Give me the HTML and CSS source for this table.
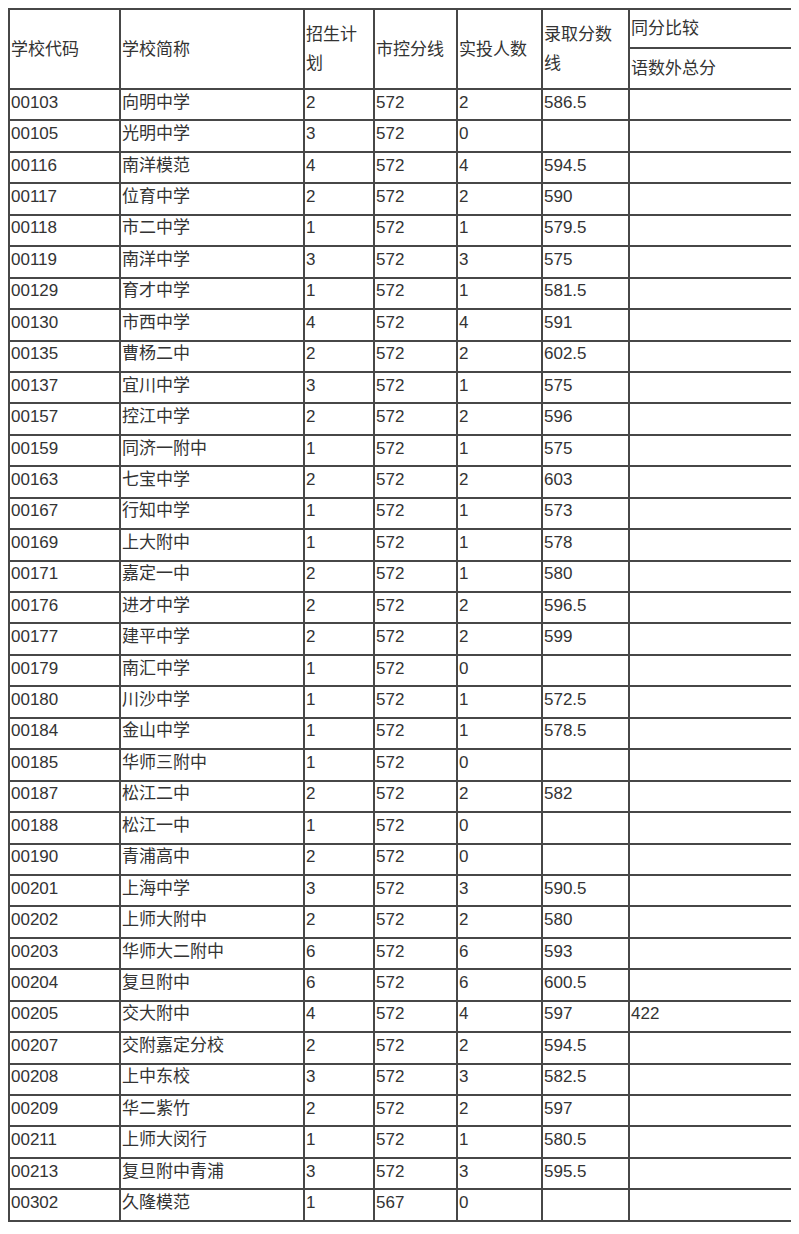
FILE: index.html
```html
<!DOCTYPE html>
<html lang="zh-CN">
<head>
<meta charset="utf-8">
<title>录取分数线</title>
<link rel="stylesheet" href="styles.css">
</head>
<body>
<table class="score-table">
  <colgroup>
    <col class="c-code"><col class="c-name"><col class="c-plan"><col class="c-line"><col class="c-num"><col class="c-score"><col class="c-cmp">
  </colgroup>
  <thead>
    <tr class="h1">
      <td rowspan="2">学校代码</td>
      <td rowspan="2">学校简称</td>
      <td rowspan="2">招生计划</td>
      <td rowspan="2">市控分线</td>
      <td rowspan="2">实投人数</td>
      <td rowspan="2">录取分数线</td>
      <td>同分比较</td>
    </tr>
    <tr class="h2">
      <td>语数外总分</td>
    </tr>
  </thead>
  <tbody>
    <tr><td>00103</td><td>向明中学</td><td>2</td><td>572</td><td>2</td><td>586.5</td><td></td></tr>
    <tr><td>00105</td><td>光明中学</td><td>3</td><td>572</td><td>0</td><td></td><td></td></tr>
    <tr><td>00116</td><td>南洋模范</td><td>4</td><td>572</td><td>4</td><td>594.5</td><td></td></tr>
    <tr><td>00117</td><td>位育中学</td><td>2</td><td>572</td><td>2</td><td>590</td><td></td></tr>
    <tr><td>00118</td><td>市二中学</td><td>1</td><td>572</td><td>1</td><td>579.5</td><td></td></tr>
    <tr><td>00119</td><td>南洋中学</td><td>3</td><td>572</td><td>3</td><td>575</td><td></td></tr>
    <tr><td>00129</td><td>育才中学</td><td>1</td><td>572</td><td>1</td><td>581.5</td><td></td></tr>
    <tr><td>00130</td><td>市西中学</td><td>4</td><td>572</td><td>4</td><td>591</td><td></td></tr>
    <tr><td>00135</td><td>曹杨二中</td><td>2</td><td>572</td><td>2</td><td>602.5</td><td></td></tr>
    <tr><td>00137</td><td>宜川中学</td><td>3</td><td>572</td><td>1</td><td>575</td><td></td></tr>
    <tr><td>00157</td><td>控江中学</td><td>2</td><td>572</td><td>2</td><td>596</td><td></td></tr>
    <tr><td>00159</td><td>同济一附中</td><td>1</td><td>572</td><td>1</td><td>575</td><td></td></tr>
    <tr><td>00163</td><td>七宝中学</td><td>2</td><td>572</td><td>2</td><td>603</td><td></td></tr>
    <tr><td>00167</td><td>行知中学</td><td>1</td><td>572</td><td>1</td><td>573</td><td></td></tr>
    <tr><td>00169</td><td>上大附中</td><td>1</td><td>572</td><td>1</td><td>578</td><td></td></tr>
    <tr><td>00171</td><td>嘉定一中</td><td>2</td><td>572</td><td>1</td><td>580</td><td></td></tr>
    <tr><td>00176</td><td>进才中学</td><td>2</td><td>572</td><td>2</td><td>596.5</td><td></td></tr>
    <tr><td>00177</td><td>建平中学</td><td>2</td><td>572</td><td>2</td><td>599</td><td></td></tr>
    <tr><td>00179</td><td>南汇中学</td><td>1</td><td>572</td><td>0</td><td></td><td></td></tr>
    <tr><td>00180</td><td>川沙中学</td><td>1</td><td>572</td><td>1</td><td>572.5</td><td></td></tr>
    <tr><td>00184</td><td>金山中学</td><td>1</td><td>572</td><td>1</td><td>578.5</td><td></td></tr>
    <tr><td>00185</td><td>华师三附中</td><td>1</td><td>572</td><td>0</td><td></td><td></td></tr>
    <tr><td>00187</td><td>松江二中</td><td>2</td><td>572</td><td>2</td><td>582</td><td></td></tr>
    <tr><td>00188</td><td>松江一中</td><td>1</td><td>572</td><td>0</td><td></td><td></td></tr>
    <tr><td>00190</td><td>青浦高中</td><td>2</td><td>572</td><td>0</td><td></td><td></td></tr>
    <tr><td>00201</td><td>上海中学</td><td>3</td><td>572</td><td>3</td><td>590.5</td><td></td></tr>
    <tr><td>00202</td><td>上师大附中</td><td>2</td><td>572</td><td>2</td><td>580</td><td></td></tr>
    <tr><td>00203</td><td>华师大二附中</td><td>6</td><td>572</td><td>6</td><td>593</td><td></td></tr>
    <tr><td>00204</td><td>复旦附中</td><td>6</td><td>572</td><td>6</td><td>600.5</td><td></td></tr>
    <tr><td>00205</td><td>交大附中</td><td>4</td><td>572</td><td>4</td><td>597</td><td>422</td></tr>
    <tr><td>00207</td><td>交附嘉定分校</td><td>2</td><td>572</td><td>2</td><td>594.5</td><td></td></tr>
    <tr><td>00208</td><td>上中东校</td><td>3</td><td>572</td><td>3</td><td>582.5</td><td></td></tr>
    <tr><td>00209</td><td>华二紫竹</td><td>2</td><td>572</td><td>2</td><td>597</td><td></td></tr>
    <tr><td>00211</td><td>上师大闵行</td><td>1</td><td>572</td><td>1</td><td>580.5</td><td></td></tr>
    <tr><td>00213</td><td>复旦附中青浦</td><td>3</td><td>572</td><td>3</td><td>595.5</td><td></td></tr>
    <tr><td>00302</td><td>久隆模范</td><td>1</td><td>567</td><td>0</td><td></td><td></td></tr>
  </tbody>
</table>
</body>
</html>
```

FILE: styles.css
```css
html, body {
  background: #ffffff;
}
body {
  margin: 8px;
  font-family: "Liberation Sans", "Noto Sans CJK SC", sans-serif;
  font-size: 17px;
  line-height: 29px;
  color: #333333;
}
.score-table {
  border-collapse: collapse;
  width: 784px;
  table-layout: fixed;
  border: 2px solid #474747;
}
.score-table td {
  border: 2px solid #474747;
  padding: 0 0 0 1px;
  vertical-align: middle;
  text-align: left;
  white-space: normal;
  overflow: hidden;
}
.c-code { width: 111px; }
.c-name { width: 184px; }
.c-plan { width: 70px; }
.c-line { width: 83px; }
.c-num { width: 85px; }
.c-score { width: 87px; }
.c-cmp { width: 164px; }
.h1 { height: 39px; }
.h2 { height: 41px; }
.score-table tbody tr {
  height: 31.44px;
}
.score-table tbody td {
  line-height: 20px;
  padding-bottom: 4px;
}
```
